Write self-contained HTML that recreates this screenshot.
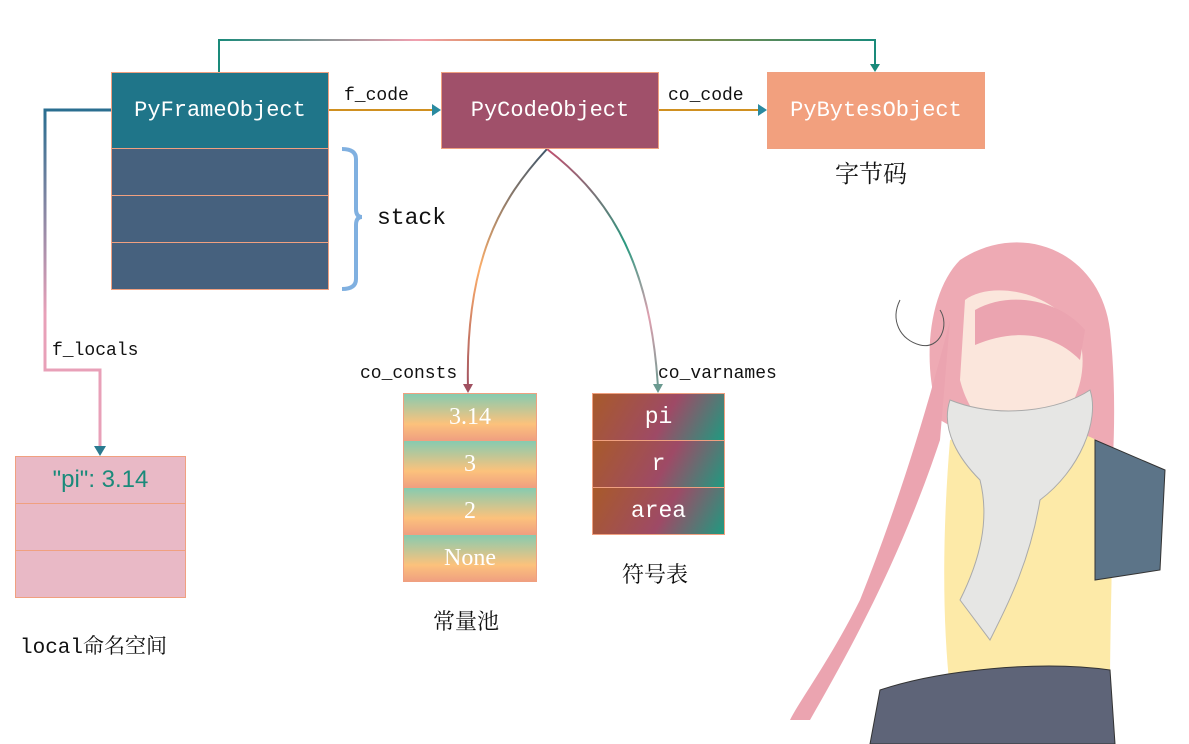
<!DOCTYPE html>
<html><head><meta charset="utf-8"><style>
body{margin:0;width:1189px;height:744px;background:#fff;position:relative;overflow:hidden;font-family:"Liberation Mono","Noto Serif CJK SC",monospace}
.b{position:absolute;box-sizing:border-box;border:1px solid #f0a080;color:#fff;text-align:center;font-family:"Liberation Serif","Noto Serif CJK SC",serif}
.t{position:absolute;white-space:nowrap;color:#111}
.c{background:linear-gradient(#86cbb0,#fcc27c 65%,#f0a080)}
.v{background:linear-gradient(120deg,#a85a2a,#9e4a66 55%,#1f9a80)}
</style></head><body>
<svg width="1189" height="744" style="position:absolute;left:0;top:0">
<defs>
<linearGradient id="g1" x1="0" x2="1"><stop offset="0" stop-color="#1a8a7a"/><stop offset=".3" stop-color="#f0a0b0"/><stop offset=".5" stop-color="#d08a20"/><stop offset="1" stop-color="#1a8a7a"/></linearGradient>
<linearGradient id="g2" x1="0" y1="0" x2="0" y2="1"><stop offset="0" stop-color="#2a6e90"/><stop offset=".6" stop-color="#e8a0b8"/></linearGradient>
<linearGradient id="g3" x1="0" y1="0" x2="0" y2="1"><stop offset="0" stop-color="#40566a"/><stop offset=".5" stop-color="#fcae6a"/><stop offset="1" stop-color="#a05060"/></linearGradient>
<linearGradient id="g4" x1="0" y1="0" x2="0" y2="1"><stop offset="0" stop-color="#c05070"/><stop offset=".4" stop-color="#2a9a80"/><stop offset=".7" stop-color="#e0a0b0"/><stop offset="1" stop-color="#6a9a90"/></linearGradient>
</defs>
<path d="M219 72V40H875V68" fill="none" stroke="url(#g1)" stroke-width="2"/>
<path d="M870 64l5 8 5-8z" fill="#1a8a7a"/>
<path d="M328 110H436" stroke="#d09020" stroke-width="2"/><path d="M432 104l9 6-9 6z" fill="#2a8aa0"/>
<path d="M658 110H762" stroke="#d09020" stroke-width="2"/><path d="M758 104l9 6-9 6z" fill="#2a8aa0"/>
<path d="M111 110H45V370H100V450" fill="none" stroke="url(#g2)" stroke-width="3"/>
<path d="M94 446l6 10 6-10z" fill="#2a7a90"/>
<path d="M342 149q14 0 14 10v50q0 8 6 8q-6 0-6 8v54q0 10-14 10" fill="none" stroke="#80b0e0" stroke-width="4"/>
<path d="M547 149C500 200 465 260 468 388" fill="none" stroke="url(#g3)" stroke-width="2"/>
<path d="M463 384l5 9 5-9z" fill="#a05060"/>
<path d="M547 149C600 190 650 250 658 388" fill="none" stroke="url(#g4)" stroke-width="2"/>
<path d="M653 384l5 9 5-9z" fill="#6a9a90"/>
<!-- character approximation -->
<path d="M960 260C1020 220 1100 250 1110 330C1120 420 1110 520 1100 600L1080 600C1060 500 960 430 940 420C920 360 930 290 960 260Z" fill="#eeaab4"/>
<path d="M950 320C930 400 900 500 860 600C830 660 800 700 790 720L810 720C850 650 900 560 940 440Z" fill="#eba4b0"/>
<path d="M965 300C990 280 1060 290 1080 340C1090 380 1070 420 1040 440C1000 450 970 420 960 380Z" fill="#fbe6dc"/>
<path d="M975 310C1010 290 1060 300 1085 330L1080 360C1050 330 1010 330 975 345Z" fill="#eba4b0"/>
<path d="M950 440C1000 420 1080 420 1110 450C1115 520 1110 600 1110 690L950 690C940 600 945 500 950 440Z" fill="#fdeaa8"/>
<path d="M950 400C1000 420 1060 410 1090 390C1100 420 1080 470 1040 500C1030 560 1010 600 990 640L960 600C980 560 990 520 980 480C960 460 940 430 950 400Z" fill="#e6e6e4" stroke="#aaa" stroke-width="1"/>
<path d="M1095 440L1165 470L1160 570L1095 580Z" fill="#5c7488" stroke="#333"/>
<path d="M880 690C940 670 1040 660 1110 670L1115 744H870Z" fill="#5e6478" stroke="#333"/>
<path d="M900 300c-10 20 0 40 20 45c20 5 30-20 20-35" fill="none" stroke="#555" stroke-width="1"/>
</svg>
<div class="b" style="left:111px;top:72px;width:218px;height:77px;background:#1f7589;line-height:75px;font-size:22px;font-family:'Liberation Mono',monospace">PyFrameObject</div>
<div class="b" style="left:111px;top:148px;width:218px;height:48px;background:#46617e"></div>
<div class="b" style="left:111px;top:195px;width:218px;height:48px;background:#46617e"></div>
<div class="b" style="left:111px;top:242px;width:218px;height:48px;background:#46617e"></div>
<div class="b" style="left:441px;top:72px;width:218px;height:77px;background:#a0506a;line-height:75px;font-size:22px;font-family:'Liberation Mono',monospace">PyCodeObject</div>
<div class="b" style="left:767px;top:72px;width:218px;height:77px;background:#f2a07e;line-height:75px;font-size:22px;font-family:'Liberation Mono',monospace">PyBytesObject</div>
<div class="t" style="left:344px;top:86px;font-size:18px">f_code</div>
<div class="t" style="left:668px;top:86px;font-size:18px">co_code</div>
<div class="t" style="left:835px;top:154px;font-size:24px;font-family:'Noto Serif CJK SC',serif">字节码</div>
<div class="t" style="left:377px;top:205px;font-size:23px">stack</div>
<div class="t" style="left:52px;top:341px;font-size:18px">f_locals</div>
<div class="t" style="left:360px;top:364px;font-size:18px">co_consts</div>
<div class="t" style="left:658px;top:364px;font-size:18px">co_varnames</div>
<div class="b" style="left:15px;top:456px;width:171px;height:48px;background:#e9b9c6;color:#1a8a7a;font-family:'Liberation Sans',sans-serif;font-size:24px;line-height:46px">"pi": 3.14</div>
<div class="b" style="left:15px;top:503px;width:171px;height:48px;background:#e9b9c6"></div>
<div class="b" style="left:15px;top:550px;width:171px;height:48px;background:#e9b9c6"></div>
<div class="t" style="left:20px;top:630px;font-size:21px">local<span style="font-family:'Noto Serif CJK SC',serif">命名空间</span></div>
<div class="b c" style="left:403px;top:393px;width:134px;height:48px;line-height:46px;font-size:24px">3.14</div>
<div class="b c" style="left:403px;top:440px;width:134px;height:48px;line-height:46px;font-size:24px">3</div>
<div class="b c" style="left:403px;top:487px;width:134px;height:48px;line-height:46px;font-size:24px">2</div>
<div class="b c" style="left:403px;top:534px;width:134px;height:48px;line-height:46px;font-size:24px">None</div>
<div class="b v" style="left:592px;top:393px;width:133px;height:48px;line-height:46px;font-size:23px;font-family:'Liberation Mono',monospace">pi</div>
<div class="b v" style="left:592px;top:440px;width:133px;height:48px;line-height:46px;font-size:23px;font-family:'Liberation Mono',monospace">r</div>
<div class="b v" style="left:592px;top:487px;width:133px;height:48px;line-height:46px;font-size:23px;font-family:'Liberation Mono',monospace">area</div>
<div class="t" style="left:433px;top:605px;font-size:22px;font-family:'Noto Serif CJK SC',serif">常量池</div>
<div class="t" style="left:622px;top:558px;font-size:22px;font-family:'Noto Serif CJK SC',serif">符号表</div>
</body></html>
